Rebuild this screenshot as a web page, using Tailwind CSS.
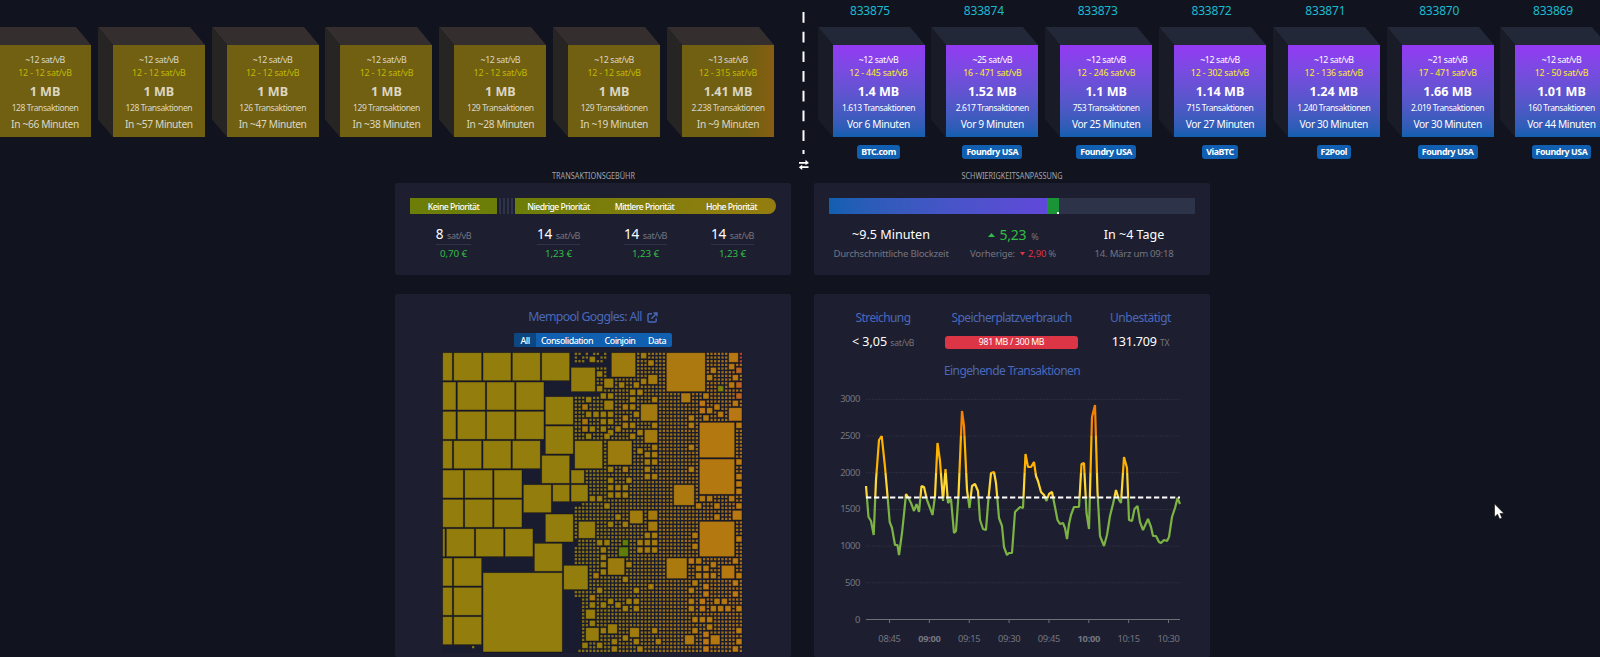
<!DOCTYPE html>
<html lang="de">
<head>
<meta charset="utf-8">
<title>Mempool</title>
<script src="https://cdn.jsdelivr.net/npm/@tailwindcss/browser@4"></script>
</head>
<body class="bg-[#11131f] text-white overflow-hidden h-[657px] w-[1600px] font-['Noto_Sans',sans-serif]">
<div class="h-[165px] flex overflow-hidden relative">
  <div id="pending" class="w-[800px] h-full flex shrink-0"></div>
  <div id="mined" class="w-[800px] h-full flex shrink-0 pl-[17.500px]"></div>
  <svg class="absolute left-[796px] top-0" width="20" height="174"><path d="M7.500 12V154" stroke="#fff" stroke-width="2" stroke-dasharray="10.700 9"/></svg>
</div>
<svg class="absolute left-[798px] top-[159px]" width="12" height="12" fill="#fff"><path d="M1 3h6.500V.8L11 3.900 7.500 6V4.700H1zM10.500 7.200H4.200V5.700L.8 8.300 4.200 11V9H10.500z"/></svg>

<main class="flex gap-[23px] pl-[395px] items-start">
  <section class="w-[396px] flex flex-col">
    <h2 class="h-[18px]"><svg class="mx-auto overflow-visible" width="90" height="18"><text x="4" y="13.500" font-size="9.500" fill="#a3a4a9" textLength="83" lengthAdjust="spacingAndGlyphs">TRANSAKTIONSGEBÜHR</text></svg></h2>
    <div class="h-[92px] bg-[#1d1f31] rounded-[2px] px-[15px] pt-[15px]">
      <div class="flex h-4 text-[8.700px] tracking-[-0.550px] leading-[18px] text-center font-medium">
        <div class="w-[87px] bg-[#6c7e08]">Keine Priorität</div>
        <div class="w-[18px] bg-[repeating-linear-gradient(90deg,#1d1f31_0_2px,#2d3348_2px_4px)]"></div>
        <div class="flex-1 rounded-r-full bg-linear-to-r from-[#6c7e08] to-[#957d10] flex"><span class="w-[87px]">Niedrige Priorität</span><span class="w-[85px]">Mittlere Priorität</span><span class="flex-1">Hohe Priorität</span></div>
      </div>
      <div id="fees" class="flex text-center mt-[8px]"></div>
    </div>
    <div class="mt-[19px] h-[363px] bg-[#1d1f31] rounded-[2px] flex flex-col items-center pt-[13px]">
      <h3 class="text-[#4a68b9] text-[12.300px] tracking-[-0.650px] leading-[22px] h-[20px] flex items-center gap-[5px]">Mempool Goggles: All <svg width="11" height="11" viewBox="0 0 11 11" fill="none" stroke="#4a68b9" stroke-width="1.400"><path d="M5 1.700H2.200Q1 1.700 1 2.900V8.800Q1 10 2.200 10H8Q9.200 10 9.200 8.800V6.300M4.300 6.700L9.600 1.400M6.500 1H10V4.500"/></svg></h3>
      <div class="mt-[6px] flex h-[14px] bg-[#105fb0] rounded-[2px] overflow-hidden text-[8.900px] tracking-[-0.500px] leading-[15px] text-center font-medium"><span class="w-[22px] bg-[#0c477f]">All</span><span class="w-[62px]">Consolidation</span><span class="w-[44px]">Coinjoin</span><span class="w-[30px]">Data</span></div>
      <svg id="map" class="mt-[5px] mr-[1px]" width="300.670" height="300.670" viewBox="0 0 82 82"></svg>
    </div>
  </section>

  <section class="w-[396px] flex flex-col">
    <h2 class="h-[18px]"><svg class="mx-auto overflow-visible" width="110" height="18"><text x="4.500" y="13.500" font-size="9.500" fill="#a3a4a9" textLength="101" lengthAdjust="spacingAndGlyphs">SCHWIERIGKEITSANPASSUNG</text></svg></h2>
    <div class="h-[92px] bg-[#1d1f31] rounded-[2px] px-[15px] pt-[15px]">
      <div class="flex h-4 bg-[#2d3348]"><div class="w-[218px] bg-linear-to-r from-[#105fb0] to-[#6048da]"></div><div class="w-[12px] bg-[#1a9436] flex justify-end items-end"><i class="w-[2px] h-[2px] bg-white"></i></div></div>
      <div class="flex mt-[10px] text-center whitespace-nowrap">
        <div class="w-[124px]"><p class="text-[12.600px] leading-[21px]">~9.5 Minuten</p><p class="text-[9.600px] tracking-[-0.220px] leading-[17px] text-[#74757f]">Durchschnittliche Blockzeit</p></div>
        <div class="w-[120px]"><p class="text-[14px] tracking-[-0.300px] h-[21px] leading-[21px] text-[#30be44] flex items-center justify-center"><svg class="mr-[5px]" width="7" height="4"><path d="M3.500 0L7 4H0z" fill="#30be44"/></svg>5,23<span class="text-[9px] text-[#74757f] ml-[5px] pt-[3px]">%</span></p><p class="text-[9.500px] tracking-[-0.150px] h-[17px] leading-[17px] text-[#74757f] flex items-center justify-center">Vorherige:<svg class="ml-[5px] mr-[3px]" width="5" height="4"><path d="M0 0H5L2.500 3.500z" fill="#dc3545"/></svg><span class="text-[#dc3545] mr-[2px]">2,90</span>%</p></div>
        <div class="flex-1"><p class="text-[12.500px] leading-[21px]">In ~4 Tage</p><p class="text-[9.600px] tracking-[-0.250px] leading-[17px] text-[#74757f]">14. März um 09:18</p></div>
      </div>
    </div>
    <div class="mt-[19px] h-[363px] bg-[#1d1f31] rounded-[2px] pt-[13px]">
      <div class="flex text-center px-[15px] whitespace-nowrap">
        <div class="w-[108px]"><p class="text-[12px] tracking-[-0.600px] h-[20px] leading-[22px] text-[#4a68b9]">Streichung</p><p class="text-[12.500px] leading-[20px] mt-[5px]">&lt; 3,05 <span class="text-[8.500px] tracking-[-0.200px] text-[#74757f]">sat/vB</span></p></div>
        <div class="w-[149px]"><p class="text-[12px] tracking-[-0.600px] h-[20px] leading-[22px] text-[#4a68b9]">Speicherplatzverbrauch</p><div class="mx-auto mt-[9px] w-[133px] h-[13px] rounded-[3px] bg-[#dc3545] text-[8.800px] tracking-[-0.300px] leading-[13px]">981 MB / 300 MB</div></div>
        <div class="flex-1"><p class="text-[12px] tracking-[-0.500px] h-[20px] leading-[22px] text-[#4a68b9]">Unbestätigt</p><p class="text-[12.500px] tracking-[-0.150px] leading-[20px] mt-[5px]">131.709 <span class="text-[8.500px] text-[#74757f]">TX</span></p></div>
      </div>
      <h3 class="mt-[8px] text-center text-[12px] tracking-[-0.600px] leading-[20px] text-[#4a68b9]">Eingehende Transaktionen</h3>
      <svg id="chart" class="mt-[4px]" width="396" height="270" viewBox="814 385 396 270"></svg>
    </div>
  </section>
</main>
<svg class="absolute left-[1494px] top-[503px]" width="12" height="18"><path d="M.5 .8V14L3.500 11.300 5.600 16 8 15 6 10.500H10z" fill="#fff" stroke="#111" stroke-width=".6"/></svg>

<script>
const el = id => document.getElementById(id);
const cube = (top, side) => `<svg class="absolute left-0 top-0" width="107" height="110"><path d="M0 0H92L107 18H15z" fill="${top}"/><path d="M0 0L15 18V110L0 92.500z" fill="${side}"/></svg>`;
const block = (b, mined) => {
  const [fee, range, size, tx, time, pool, height] = b;
  const face = mined ? 'bg-linear-to-b from-[#9339f4] to-[#105fb0]' : fee === '13' ? 'bg-[linear-gradient(90deg,#716012_70%,#855e12)]' : 'bg-[#716012]';
  return `<div class="w-[113.830px] shrink-0 h-full relative whitespace-nowrap text-center">
  ${mined ? `<p class="w-[105px] h-[27px] text-[12px] tracking-[-0.200px] leading-[22px] text-[#1bbad0]">${height}</p>` : '<p class="h-[27px]"></p>'}
  <div class="relative w-[107px] h-[110px]">${mined ? cube('#232838', '#191c27') : cube('#352e2e', '#272424')}
   <div class="absolute left-[15px] top-[17.500px] w-[92px] h-[92px] ${face} ${mined ? '' : 'text-white/75'}">
    <p class="mt-[8px] text-[8.800px] tracking-[-0.350px] leading-[14px]">~${fee} sat/vB</p>
    <p class="text-[8.800px] tracking-[-0.150px] leading-[13px] ${mined ? 'text-[#fff01f]' : 'text-[#c3b800]'}">${range} sat/vB</p>
    <p class="mt-[3px] text-[12.600px] leading-[18px] font-bold">${size} MB</p>
    <p class="text-[8.500px] leading-[13px] tracking-[-0.400px]">${tx} Transaktionen</p>
    <p class="mt-[2px] text-[10.200px] tracking-[-0.350px] leading-[16px]">${time} Minuten</p>
   </div></div>
  ${mined ? `<div class="w-[107px] pl-[15px] mt-[8px] flex justify-center"><span class="h-[14px] px-[4px] rounded-[3px] bg-[#105fb0] text-[8.800px] tracking-[-0.400px] leading-[14px] font-bold">${pool}</span></div>` : ''}
</div>`;
};
el('pending').innerHTML = '<div class="w-[16px] h-full -ml-[32px] shrink-0"></div>' + [
 ['12','12 - 12','1','128','In ~66'],['12','12 - 12','1','128','In ~57'],['12','12 - 12','1','126','In ~47'],['12','12 - 12','1','129','In ~38'],
 ['12','12 - 12','1','129','In ~28'],['12','12 - 12','1','129','In ~19'],['13','12 - 315','1.41','2.238','In ~9']].map(b => block(b, false)).join('');
el('mined').innerHTML = [
 ['12','12 - 445','1.4','1.613','Vor 6','BTC.com'],['25','16 - 471','1.52','2.617','Vor 9','Foundry USA'],['12','12 - 246','1.1','753','Vor 25','Foundry USA'],
 ['12','12 - 302','1.14','715','Vor 27','ViaBTC'],['12','12 - 136','1.24','1.240','Vor 30','F2Pool'],['21','17 - 471','1.66','2.019','Vor 30','Foundry USA'],
 ['12','12 - 50','1.01','160','Vor 44','Foundry USA']].map((b, i) => block([...b, 833875 - i], true)).join('');

el('fees').innerHTML = [['8','0,70','w-[87px]'],['14','1,23','ml-[18px] w-[87px]'],['14','1,23','w-[87px]'],['14','1,23','w-[87px]']].map(([f, e, w]) =>
 `<div class="${w} flex flex-col items-center whitespace-nowrap"><p class="h-[23px] border-b border-[#2d3348] text-[13.500px] leading-[25px]">${f} <span class="text-[9px] tracking-[-0.350px] text-[#74757f]">sat/vB</span></p><p class="text-[9.800px] tracking-[-0.100px] leading-[17px] text-[#30be44]">${e} €</p></div>`).join('');

/* Block treemap on an 82 x 82 cell grid: x, y, width, height, colour */
const O = '#a5760f', G = '#5f7d08', R = '#b9621f';
const big = [
 [0,0,3,8],[3,0,8],[11,0,8],[19,0,8],[27,0,8],[0,8,4,8],[4,8,8],[12,8,8],[20,8,8],[0,16,4,8],[4,16,8],[12,16,8],[20,16,8],
 [0,24,3,8],[3,24,8],[11,24,8],[19,24,8],[0,32,6,8],[6,32,8],[14,32,8],[0,40,6,8],[6,40,8],[14,40,8],[0,48,1,8],[1,48,8],[9,48,8],[17,48,8],
 [0,56,3,8],[3,56,8],[0,64,3,8],[3,64,8],[0,72,3,8],[3,72,8],[11,60,22],[28,12,8],[28,20,8],[27,28,8],[22,36,8],[28,44,8],[25,52,8],[33,58,7],
 [35,4,7],[35,32,4],[30,36,5],[35,36,5],[36,24,8],[37,46,5],[46,0,7],[61,0,11],[54,14,5],[55,21,4],[45,24,7],[70,19,10],[70,29,10],[63,36,6],
 [78,15,4,4,'#b97714'],[78,0,3],[65,11,3],[56,6,3],[44,7,3],[44,13,3],[70,46,10],[61,56,6],[45,56,5],[51,43,4],[56,43,3],[56,46,3],[79,43,3],[48,53,3,3,G],
 [76,58,4],[39,70,3],[39,75,4],[45,74,3],[51,75,3],[66,77,3],[73,77,3]];
const two = '54,0 56,2 54,7 52,8 48,8 53,10 51,10 51,12 57,12 43,11 45,11 42,9 42,5 40,1 39,12 39,16 41,16 43,16 45,16 51,14 52,16 43,18 45,18 40,20 43,20 47,20 51,19 57,19 45,21 53,21 39,22 44,22 51,22 57,25 53,26 55,27 57,27 55,29 57,29 45,31 55,31 55,33 57,33 45,34 50,34 45,36 47,36 49,36 45,38 47,38 49,38 40,39 42,39 67,17 67,19 67,25 67,31 73,4 72,6 71,11 72,15 74,14 75,16 71,17 78,3 79,6 78,8 79,13 80,19 80,29 80,33 80,35 80,37 78,39 72,39 70,39 44,41 69,41 74,41 80,41 74,44 47,44 45,46 49,46 55,49 57,49 42,51 44,51 53,51 55,51 57,51 43,53 53,53 55,53 57,53 43,55 43,57 43,59 50,57 49,61 56,63 42,64 52,64 68,49 68,52 80,50 69,56 73,57 79,56 69,58 71,58 69,60 71,60 73,60 80,60 68,62 79,62 67,64 79,65 40,68 43,68 45,67 47,68 50,67 52,67 49,69 52,69 67,67 74,67 76,67 67,69 73,69 75,69 77,69 80,69 40,73 68,72 70,72 72,72 72,74 43,75 57,75 68,75 80,75 49,77 46,78 52,78 58,78 80,78 38,79 42,79 46,80 53,80 79,80';
const twoO = '38,14 38,18 38,20 49,14 49,17 49,19 49,31 70,13 70,15 41,60 67,56 71,63 71,65 40,66 70,67 70,69 71,76 71,78 71,80';
two.split(' ').forEach(p => big.push([...p.split(',').map(Number), 2]));
twoO.split(' ').forEach(p => { const q = p.split(',').map(Number); big.push([...q, 2, 2, q[0] > 60 ? '#bd7715' : O]); });
big.push([75,9,2,2,'#7c7d0b'],[49,51,2,2,G],[80,4,2,2,R],[80,8,2,2,R],[80,11,2,2,R]);
const mix = (x) => { const t = Math.max(0, (x - 38) / 44); return `rgb(${147 + 40 * t | 0},${125 - 5 * t | 0},${13 + 5 * t | 0})`; };
const used = new Set(); let s = '<rect width="82" height="82" fill="#191b2e"/>';
for (const [x, y, w, h = w, c] of big) {
  for (let i = x; i < x + w; i++) for (let j = y; j < y + h; j++) used.add(i + ',' + j);
  s += `<rect x="${x + .2}" y="${y + .2}" width="${w - .4}" height="${h - .4}" fill="${c || mix(x + w / 2)}" stroke="#000" stroke-opacity=".3" stroke-width=".2"/>`;
}
const start = y => y < 4 ? 36 : y < 11 ? 42 : y < 12 ? 43 : y < 24 ? 36 : y < 32 ? 44 : y < 36 ? 39 : y < 41 ? 40 : y < 42 ? 38 : y < 51 ? 36 : y < 53 ? 37 : y < 58 ? 36 : y < 65 ? 40 : y < 67 ? 36 : y < 81 ? 38 : 37;
for (let y = 0; y < 82; y++) for (let x = start(y); x < 82; x++) {
  if (used.has(x + ',' + y)) continue;
  if (x < 46 && y < 7 && (x * 7 + y * 5 + x * y) % 5 < 2) continue;
  const red = x === 81 && y < 3;
  s += `<rect x="${x + .2}" y="${y + .2}" width=".62" height=".62" fill="${red ? '#c4402a' : mix(x)}" opacity=".9"/>`;
}
s += '<rect x="8.200" y="80.200" width=".6" height=".6" fill="#8f7d0c"/>';
el('map').innerHTML = s;

/* Incoming transactions chart */
const pts = '866,486 868.500,517 871,521 873.700,535 876,480 879,440 881.700,436 885,467 887,490 889.700,522 892,528 895,545 897.500,545 899,555 902,533 904,514 906,494 909,499 911,503 914,511 916.500,504 919,512 921.500,486 924,487 927,500 930,508 932.500,515 935,496 937.500,443 940,461 943,501 945.500,469 948,503 951,499 954,533 956,531 958.500,495 962,411 964,426 967,490 969.500,508 972,486 975,484 978,491 980,520 983,529 986,530 988.500,498 991,473 994,472 996,483 999,518 1002,526 1004,547 1007,555 1009,553 1012,553 1015,512 1020,507 1023,508 1025.500,454 1028,467 1031,467 1034,462 1036,476 1038,481 1041,492 1044,495 1046.500,501 1049,494 1052,492 1055,507 1057.500,520 1060,524 1063,523 1065,528 1067,539 1069,524 1071,515 1074,507 1079,507 1081.500,464 1084,463 1086.500,513 1089,529 1092,417 1095,405 1097.500,492 1100,536 1104,546 1107,535 1110,516 1113,504 1116,490 1119,500 1121,503 1124,457 1127,468 1129,520 1132,521 1134.500,509 1137.500,506 1140,522 1143,530 1148,519 1151,527 1153,536 1156,536 1159,542 1161,543 1164,540 1167,541 1169,537 1172,517 1175,508 1177.500,498 1180,504';
let g = '<defs><linearGradient id="lg" gradientUnits="userSpaceOnUse" x1="0" y1="400" x2="0" y2="560">' +
 [[0,'#f57c00'],[.225,'#fb8c00'],[.225,'#ffb300'],[.455,'#ffb300'],[.455,'#fdd835'],[.61,'#fdd835'],[.61,'#7cb342'],[1,'#7cb342']].map(a => `<stop offset="${a[0]}" stop-color="${a[1]}"/>`).join('') + '</linearGradient></defs>';
for (let i = 0; i < 7; i++) {
  const y = 619.500 - i * 36.700;
  if (i) g += `<path d="M866 ${y}H1180" stroke="#fff" stroke-opacity=".07" stroke-dasharray="2 1"/>`;
  g += `<text x="860" y="${y + 3}" text-anchor="end" font-size="9.400" letter-spacing="-.4" fill="#74757f">${i * 500}</text>`;
}
g += '<path d="M866 619.500H1180" stroke="#6e7079"/>';
['08:45','09:00','09:15','09:30','09:45','10:00','10:15','10:30'].forEach((t, i) => {
  const x = 889.500 + i * 39.860;
  g += `<path d="M${x} 619V623" stroke="#6e7079"/><text x="${x}" y="641.500" text-anchor="middle" font-size="9.300" letter-spacing="-.3" fill="#74757f" ${t.endsWith(':00') ? 'font-weight="700"' : ''}>${t}</text>`;
});
g += `<polyline points="${pts}" fill="none" stroke="url(#lg)" stroke-width="2.200" stroke-linejoin="bevel"/><path d="M866 497.500H1180" stroke="#fff" stroke-width="1.800" stroke-dasharray="5.300 2.700"/>`;
el('chart').innerHTML = g;
</script>
</body>
</html>
